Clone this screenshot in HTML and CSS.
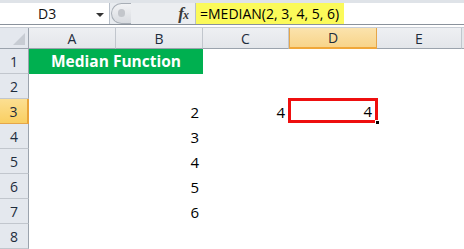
FILE: index.html
```html
<!DOCTYPE html>
<html>
<head>
<meta charset="utf-8">
<link rel="stylesheet" href="styles.css">
</head>
<body>
<div class="app">
  <div class="topstrip"></div>
  <div class="fbar">
    <div class="namebox"><span class="ref">D3</span><span class="caret"></span></div>
    <div class="knob"></div>
    <div class="fxzone"><span class="fx">f<span class="x">x</span></span></div>
    <div class="input"><span class="formula">=MEDIAN(2, 3, 4, 5, 6)</span></div>
  </div>
  <div class="gap"></div>
  <div class="sheet">
    <div class="corner"><span class="tri"></span></div>
    <div class="ch">A</div>
    <div class="ch">B</div>
    <div class="ch">C</div>
    <div class="ch sel">D</div>
    <div class="ch">E</div>
    <div class="rest"></div>

    <div class="rh">1</div>
    <div class="title">Median Function</div>
    <div class="c"></div><div class="c"></div><div class="c"></div><div class="c"></div>

    <div class="rh">2</div>
    <div class="c"></div><div class="c"></div><div class="c"></div><div class="c"></div><div class="c"></div><div class="c"></div>

    <div class="rh sel">3</div>
    <div class="c"></div><div class="c num">2</div><div class="c num">4</div><div class="c num active">4<span class="handle"></span></div><div class="c"></div><div class="c"></div>

    <div class="rh">4</div>
    <div class="c"></div><div class="c num">3</div><div class="c"></div><div class="c"></div><div class="c"></div><div class="c"></div>

    <div class="rh">5</div>
    <div class="c"></div><div class="c num">4</div><div class="c"></div><div class="c"></div><div class="c"></div><div class="c"></div>

    <div class="rh">6</div>
    <div class="c"></div><div class="c num">5</div><div class="c"></div><div class="c"></div><div class="c"></div><div class="c"></div>

    <div class="rh">7</div>
    <div class="c"></div><div class="c num">6</div><div class="c"></div><div class="c"></div><div class="c"></div><div class="c"></div>

    <div class="rh">8</div>
    <div class="c"></div><div class="c"></div><div class="c"></div><div class="c"></div><div class="c"></div><div class="c"></div>
  </div>
</div>
</body>
</html>
```

FILE: styles.css
```css
* { box-sizing: border-box; }
html, body { margin: 0; padding: 0; background: #fff; }
body { font-family: "Open Sans", "Liberation Sans", sans-serif; }
.app { width: 464px; height: 249px; overflow: hidden; }

.topstrip { height: 3px; background: #dfe3e8; }
.fbar {
  height: 22px;
  display: flex;
  background: #e9ecf0;
  border-bottom: 1px solid #8a929c;
}
.namebox {
  width: 110px;
  background: #fff;
  border-right: 1px solid #b8c0ca;
  position: relative;
  display: flex;
  align-items: center;
  font-size: 14px;
  color: #111;
}
.ref { margin-left: 38px; }
.caret {
  position: absolute;
  left: 96px; top: 10px;
  width: 0; height: 0;
  border-left: 4px solid transparent;
  border-right: 4px solid transparent;
  border-top: 4px solid #333;
}
.knob {
  width: 20px;
  margin-left: 1px;
  border-radius: 11px 0 0 11px;
  background: linear-gradient(#f2f3f5, #d8dbe0);
  border: 1px solid #a8aeb6;
  border-right: none;
  position: relative;
}
.knob::after {
  content: "";
  position: absolute;
  left: 6px; top: 5px;
  width: 7px; height: 8px;
  border-radius: 4px;
  background: #c3c6cb;
}
.fxzone {
  width: 64px;
  display: flex;
  align-items: center;
  justify-content: flex-end;
  padding-right: 7px;
  background: #eceef1;
}
.fx {
  font-family: "Liberation Serif", serif;
  font-style: italic;
  font-weight: bold;
  font-size: 17px;
  color: #3a3a3a;
  letter-spacing: -1px;
}
.fx .x { font-size: 12px; }
.input {
  flex: 1;
  background: #fff;
  border-left: 1px solid #b8c0ca;
  display: flex;
  align-items: stretch;
}
.formula {
  background: #fbfa5a;
  font-size: 14px;
  color: #000;
  padding: 0 5px 0 4px;
  display: flex;
  align-items: center;
}
.gap { height: 3px; background: #fff; border-bottom: 1px solid #c9ced6; }

.sheet {
  display: grid;
  grid-template-columns: 29px 87px 87px 86px 88px 85px 2px;
  grid-template-rows: 21px repeat(8, 25px);
}
.corner {
  background: #e4e8ee;
  border-right: 1px solid #9ba3ad;
  border-bottom: 1px solid #9ba3ad;
  position: relative;
}
.tri {
  position: absolute;
  right: 3px; bottom: 3px;
  width: 0; height: 0;
  border-left: 12px solid transparent;
  border-bottom: 12px solid #c7ccd3;
}
.ch {
  background: linear-gradient(#eef0f3, #e3e6ea);
  border-right: 1px solid #c1c6cd;
  border-bottom: 1px solid #9ba3ad;
  display: flex;
  align-items: center;
  justify-content: center;
  font-size: 14px;
  color: #1e2c3c;
}
.ch.sel {
  background: linear-gradient(#fbe3ad, #f8d48a);
  border-right: 1px solid #e5a64a;
  border-bottom: 2px solid #f0a73a;
  border-left: 1px solid #e5a64a;
}
.rest { background: #e4e7ea; border-bottom: 1px solid #9ba3ad; }
.rh {
  background: #e4e8ee;
  border-right: 1px solid #9ba3ad;
  border-bottom: 1px solid #c1c6cd;
  display: flex;
  align-items: center;
  justify-content: center;
  font-size: 14px;
  color: #1e2c3c;
}
.rh.sel {
  background: linear-gradient(#fcdf92, #f9cf62);
  border-right: 2px solid #e8a33a;
  border-bottom: 1px solid #e5a64a;
}
.c { background: #fff; }
.title {
  grid-column: span 2;
  background: #00b050;
  color: #fff;
  font-weight: bold;
  font-size: 15.5px;
  display: flex;
  align-items: center;
  justify-content: center;
  padding-bottom: 1px;
}
.num {
  display: flex;
  align-items: center;
  justify-content: flex-end;
  padding-right: 4px;
  font-size: 15px;
  color: #000;
}
.active {
  position: relative;
  border: 3px solid #ee0f0f;
  margin: -1px -1px 1px -1px;
  padding-right: 3px;
}
.handle {
  position: absolute;
  right: -5px; bottom: -5px;
  width: 5px; height: 5px;
  background: #000;
  border: 1px solid #fff;
}
```
